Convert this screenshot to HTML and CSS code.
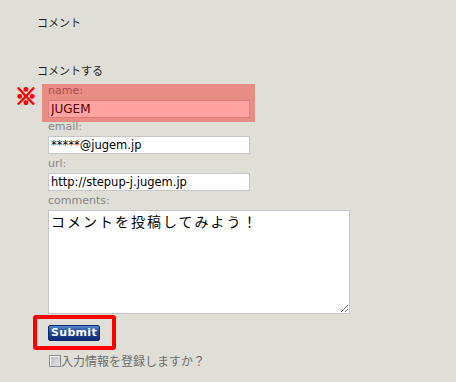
FILE: index.html
```html
<!DOCTYPE html>
<html lang="ja">
<head>
<meta charset="utf-8">
<title>コメント</title>
<link rel="stylesheet" href="styles.css">
</head>
<body>
<div class="page">
  <div class="heading first">コメント</div>
  <div class="heading second">コメントする</div>
  <form class="form">
    <div class="field highlight">
      <span class="mark">※</span>
      <label class="label label-name">name:</label>
      <input class="text text-pink" type="text" value="JUGEM">
    </div>
    <div class="field">
      <label class="label">email:</label>
      <input class="text" type="text" value="*****@jugem.jp">
    </div>
    <div class="field">
      <label class="label">url:</label>
      <input class="text" type="text" value="http://stepup-j.jugem.jp">
    </div>
    <div class="field">
      <label class="label">comments:</label>
      <textarea class="comment">コメントを投稿してみよう！</textarea>
    </div>
    <div class="submit-frame">
      <button class="submit" type="button">Submit</button>
    </div>
    <div class="remember">
      <span class="check"></span>
      <span class="remember-text">入力情報を登録しますか？</span>
    </div>
  </form>
</div>
</body>
</html>
```

FILE: styles.css
```css
html, body {
  margin: 0;
  padding: 0;
  background: #dfdfd8;
}
body {
  font-family: "DejaVu Sans", "Noto Sans CJK JP", sans-serif;
  width: 456px;
  height: 382px;
  overflow: hidden;
}
.page {
  padding: 14px 0 0 37px;
}
.heading {
  font-family: "Noto Sans CJK JP", sans-serif;
  font-size: 11px;
  line-height: 16px;
  color: #1e1e1e;
}
.second {
  margin-top: 32px;
}
.form {
  margin: 6px 0 0 5px;
  display: flex;
  flex-direction: column;
  align-items: flex-start;
}
.field {
  display: flex;
  flex-direction: column;
  align-items: flex-start;
  padding-left: 6px;
  margin-top: 3px;
}
.field.highlight {
  position: relative;
  margin-top: 0;
  margin-bottom: -5px;
  padding: 0 5px 4px 6px;
  background: #ea8c86;
}
.mark {
  position: absolute;
  left: -27px;
  top: -2px;
  font-family: "Noto Sans CJK JP", sans-serif;
  font-size: 22px;
  line-height: 24px;
  font-weight: bold;
  color: #ff0000;
  -webkit-text-stroke: 1.4px #ff0000;
}
.label {
  font-size: 11px;
  line-height: 14px;
  height: 14px;
  margin-bottom: 2px;
  color: #858585;
}
.label-name {
  color: #a8504c;
}
.text {
  box-sizing: border-box;
  width: 202px;
  height: 18px;
  margin: 0;
  padding: 0 2px;
  border: 1px solid #c6c6c6;
  background: #ffffff;
  font-family: "DejaVu Sans", sans-serif;
  font-size: 11.5px;
  color: #000000;
  outline: none;
}
.text-pink {
  background: #ffa3a3;
  border-color: #e27c7a;
  color: #5a0000;
  font-size: 12px;
}
.comment {
  box-sizing: border-box;
  width: 302px;
  height: 104px;
  margin: 0;
  padding: 1px 2px;
  border: 1px solid #c6c6c6;
  background: #ffffff;
  font-family: "Noto Sans CJK JP", sans-serif;
  font-size: 14px;
  letter-spacing: 2px;
  line-height: 18px;
  color: #000000;
  outline: none;
}
.submit-frame {
  margin: 1px 0 0 -9px;
  padding: 6px 12px 5px 11px;
  border: 4px solid #ff0000;
  border-radius: 3px;
  display: flex;
}
.submit {
  box-sizing: border-box;
  width: 52px;
  height: 16px;
  margin: 0;
  padding: 0;
  border: 1px solid #0e2a6e;
  border-radius: 2px;
  background: linear-gradient(to bottom, #5a86cc 0%, #2352a6 35%, #173f8e 65%, #0c2668 100%);
  color: #ffffff;
  font-family: "DejaVu Sans", sans-serif;
  font-weight: bold;
  font-size: 11px;
  line-height: 14px;
  letter-spacing: 0.3px;
}
.remember {
  display: flex;
  align-items: center;
  margin: 3px 0 0 7px;
}
.check {
  box-sizing: border-box;
  width: 12px;
  height: 12px;
  border: 1px solid #8c8c8c;
  background: linear-gradient(135deg, #b8b8b8 0%, #e6e6e6 100%);
  box-shadow: inset 1px 1px 0 #ffffff;
}
.remember-text {
  font-family: "Noto Sans CJK JP", sans-serif;
  font-size: 12px;
  line-height: 16px;
  color: #6e6e6e;
}
```
